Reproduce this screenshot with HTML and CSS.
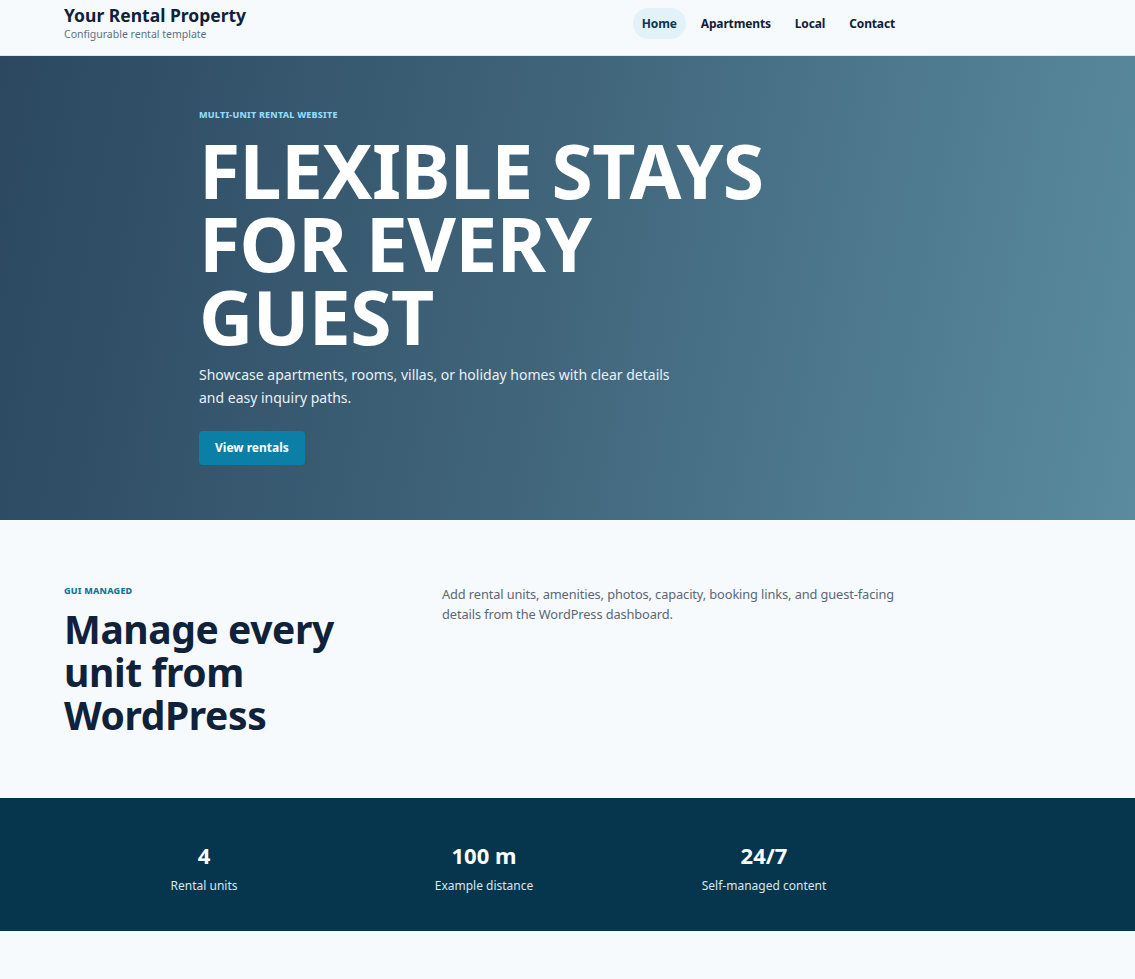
FILE: index.html
```html
<!DOCTYPE html>
<html lang="en">
<head>
    <meta charset="UTF-8">
    <meta name="viewport" content="width=device-width, initial-scale=1.0">
    <title>Your Rental Property</title>
    <link rel="stylesheet" href="styles.css">
</head>
<body>
<header class="site-header">
    <div class="container header-inner">
        <div class="brand">
            <a class="brand-name" href="#">Your Rental Property</a>
            <span class="brand-tag">Configurable rental template</span>
        </div>
        <nav class="main-nav">
            <a class="active" href="#">Home</a>
            <a href="#">Apartments</a>
            <a href="#">Local</a>
            <a href="#">Contact</a>
        </nav>
    </div>
</header>

<section class="hero">
    <div class="hero-inner">
        <p class="eyebrow eyebrow-light">Multi-unit rental website</p>
        <h1>Flexible stays for every guest</h1>
        <p class="hero-text">Showcase apartments, rooms, villas, or holiday homes with clear details and easy inquiry paths.</p>
        <a class="button" href="#">View rentals</a>
    </div>
</section>

<section class="intro">
    <div class="container intro-grid">
        <div>
            <p class="eyebrow">GUI managed</p>
            <h2>Manage every unit from WordPress</h2>
        </div>
        <p class="intro-text">Add rental units, amenities, photos, capacity, booking links, and guest-facing details from the WordPress dashboard.</p>
    </div>
</section>

<section class="stats">
    <div class="container stats-grid">
        <div class="stat">
            <strong>4</strong>
            <span>Rental units</span>
        </div>
        <div class="stat">
            <strong>100 m</strong>
            <span>Example distance</span>
        </div>
        <div class="stat">
            <strong>24/7</strong>
            <span>Self-managed content</span>
        </div>
    </div>
</section>

<div class="page-end"></div>
</body>
</html>
```

FILE: styles.css
```css
body {
    font-family: 'Noto Sans', 'Open Sans', sans-serif;
    background-color: #f6fafd;
    color: #10213a;
    margin: 0;
    padding: 0;
}

a {
    text-decoration: none;
    color: inherit;
}

.container {
    width: 840px;
    margin-left: 64px;
}

/* header */

.site-header {
    background-color: #f6fafd;
    border-bottom: 1px solid #dde6ee;
    height: 55px;
}

.header-inner {
    display: flex;
    justify-content: space-between;
    align-items: center;
    height: 100%;
}

.brand {
    display: flex;
    flex-direction: column;
    margin-top: -10px;
}

.brand-name {
    font-size: 17.5px;
    font-weight: 700;
    color: #10213a;
    line-height: 22px;
}

.brand-tag {
    font-size: 10.5px;
    color: #5f6f84;
    line-height: 13px;
    margin-top: 2px;
}

.main-nav {
    display: flex;
    gap: 6px;
    margin-top: -9px;
}

.main-nav a {
    font-size: 12px;
    font-weight: 700;
    letter-spacing: -0.15px;
    color: #10213a;
    padding: 7px 9px;
    border-radius: 16px;
}

.main-nav a.active {
    background-color: #e1f2f9;
    color: #0b3550;
}

/* hero */

.hero {
    background: linear-gradient(100deg, #2b4860 0%, #3f6379 45%, #5a8b9f 100%);
    height: 464px;
    color: white;
}

.hero-inner {
    padding: 52px 0 0 199px;
}

.eyebrow {
    font-size: 9px;
    font-weight: 800;
    text-transform: uppercase;
    letter-spacing: 0.2px;
    color: #0e7597;
    margin: 0;
}

.eyebrow-light {
    color: #8fdcfb;
}

.hero h1 {
    font-size: 75px;
    line-height: 73px;
    font-weight: 700;
    text-transform: uppercase;
    letter-spacing: -0.6px;
    margin: 13px 0 10px;
    max-width: 620px;
}

.hero-text {
    font-size: 14px;
    line-height: 23px;
    color: #eaf1f6;
    max-width: 490px;
    margin: 0 0 22px;
}

.button {
    display: inline-block;
    background-color: #0c7fa7;
    color: white;
    font-size: 12px;
    font-weight: 700;
    padding: 0 16px;
    height: 34px;
    line-height: 34px;
    border-radius: 4px;
}

/* intro */

.intro {
    padding: 64px 0 62px;
}

.intro-grid {
    display: grid;
    grid-template-columns: 336px 1fr;
    gap: 42px;
}

.intro h2 {
    font-size: 39px;
    line-height: 43px;
    font-weight: 700;
    color: #10213a;
    letter-spacing: -0.4px;
    margin: 10px 0 0;
}

.intro-text {
    font-size: 12.8px;
    line-height: 20px;
    letter-spacing: -0.1px;
    color: #5b6678;
    margin: 0;
    max-width: 462px;
}

/* stats */

.stats {
    background-color: #06364e;
    color: white;
    height: 133px;
}

.stats-grid {
    display: grid;
    grid-template-columns: repeat(3, 1fr);
    padding-top: 42px;
}

.stat {
    display: flex;
    flex-direction: column;
    align-items: center;
}

.stat strong {
    font-size: 22px;
    line-height: 30px;
    font-weight: 700;
}

.stat span {
    font-size: 12px;
    color: #d7e6ef;
    margin-top: 7px;
}

.page-end {
    height: 48px;
}
```
